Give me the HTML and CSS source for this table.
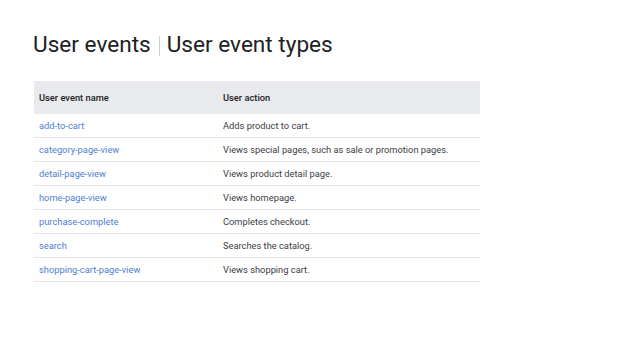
FILE: index.html
```html
<!DOCTYPE html>
<html>
<head>
<meta charset="utf-8">
<link rel="stylesheet" href="styles.css">
</head>
<body>
<div class="page">
  <h1 class="title">User events<span class="sep"></span>User event types</h1>
  <table class="events">
    <thead>
      <tr><th class="c1">User event name</th><th>User action</th></tr>
    </thead>
    <tbody>
      <tr><td class="c1"><a>add-to-cart</a></td><td>Adds product to cart.</td></tr>
      <tr><td class="c1"><a>category-page-view</a></td><td>Views special pages, such as sale or promotion pages.</td></tr>
      <tr><td class="c1"><a>detail-page-view</a></td><td>Views product detail page.</td></tr>
      <tr><td class="c1"><a>home-page-view</a></td><td>Views homepage.</td></tr>
      <tr><td class="c1"><a>purchase-complete</a></td><td>Completes checkout.</td></tr>
      <tr><td class="c1"><a>search</a></td><td>Searches the catalog.</td></tr>
      <tr><td class="c1"><a>shopping-cart-page-view</a></td><td>Views shopping cart.</td></tr>
    </tbody>
  </table>
</div>
</body>
</html>
```
FILE: styles.css
```css
html, body { margin: 0; padding: 0; background: #fff; }
.page { padding: 31px 0 0 33px; font-family: Roboto, "Liberation Sans", sans-serif; }
.title {
  margin: 0;
  font-family: Roboto, sans-serif;
  font-weight: 400;
  font-size: 22.6px;
  line-height: 28px;
  color: #202124;
  display: flex;
  align-items: center;
}
.sep {
  display: inline-block;
  width: 1px;
  height: 20px;
  background: #cfcfcf;
  margin: 2px 7px 0 8px;
}
.events {
  margin: 22px 0 0 1px;
  width: 446px;
  border-collapse: collapse;
  font-size: 9.3px;
  color: #3c4043;
}
.events th {
  background: #e8eaed;
  text-align: left;
  font-weight: 500;
  color: #202124;
  height: 33px;
  padding: 0 0 0 5px;
}
.events td {
  height: 23px;
  padding: 0 0 0 5px;
  border-bottom: 1px solid #e3e3e3;
}
.events .c1 { width: 179px; }
.events a { color: #4f80d1; text-decoration: none; }
```
